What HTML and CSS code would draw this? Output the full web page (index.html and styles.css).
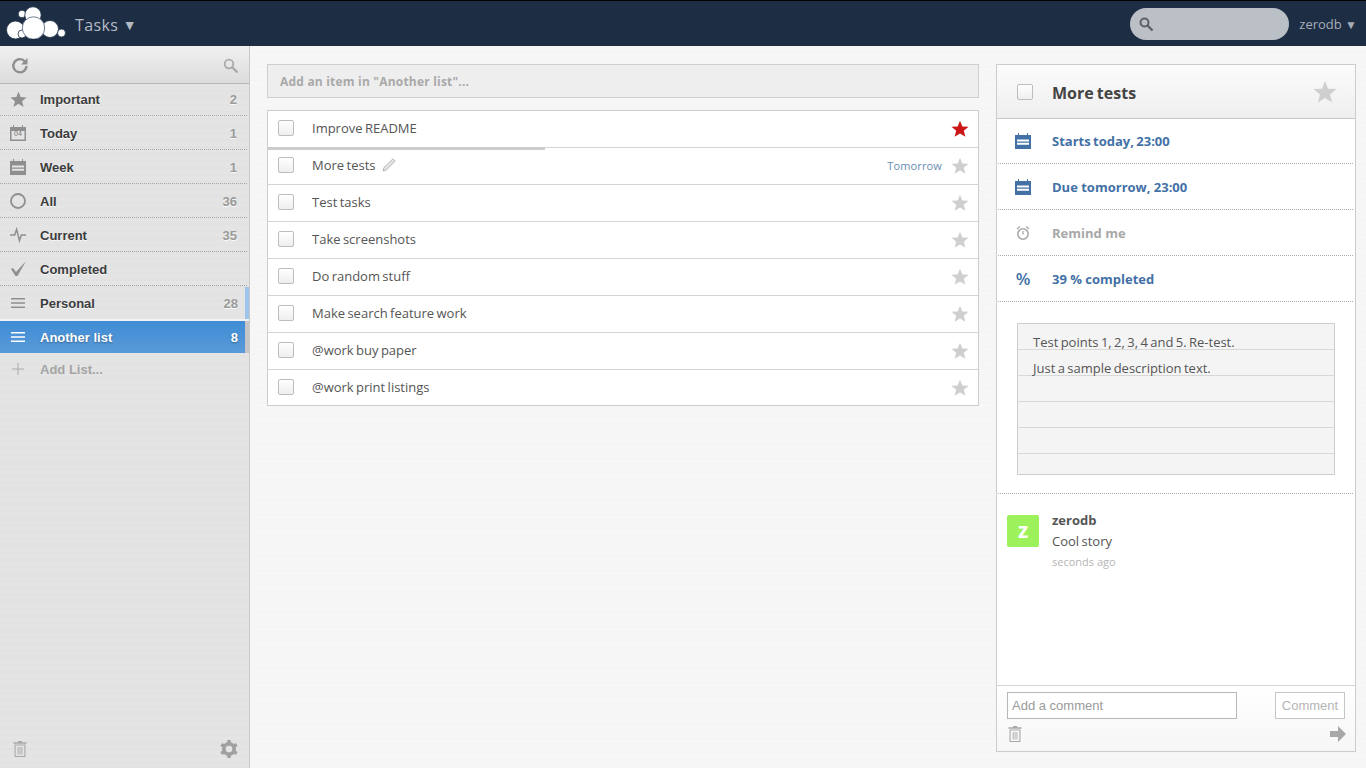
FILE: index.html
```html
<!DOCTYPE html>
<html lang="en">
<head>
<meta charset="utf-8">
<title>Tasks</title>
<link rel="stylesheet" href="styles.css">
</head>
<body>
<svg class="defs" width="0" height="0" aria-hidden="true">
  <defs>
    <symbol id="i-star" viewBox="0 0 20 20"><path d="M10 .8l2.600 6.400 6.900.4-5.300 4.400 1.800 6.700L10 15l-6 3.700 1.800-6.700L.5 7.600l6.900-.4z"/></symbol>
    <symbol id="i-trash" viewBox="0 0 14 16"><path fill-rule="evenodd" d="M5 0h4v1.200h4.500v1.600H.5V1.200H5zM1.500 3.500h11V16h-11zM2.600 4.500v10.400h8.800V4.500zM4.700 6h.9v7.500h-.9zM6.600 6h.9v7.500h-.9zM8.500 6h.9v7.500h-.9z"/></symbol>
    <symbol id="i-cal" viewBox="0 0 16 16"><path fill-rule="evenodd" d="M3 0h1v2h8V0h1v2h3v14H0V2h3zM2 6.500v2h12v-2zm0 3.200v2h12v-2z"/></symbol>
  </defs>
</svg>
<header class="topbar">
  <div class="brand">
    <svg class="logo" viewBox="0 0 60 34" width="60" height="34" aria-hidden="true">
      <g fill="#fff" stroke="#1d2d44" stroke-width=".8">
        <circle cx="16" cy="9" r="3.800"/>
        <circle cx="27" cy="10" r="8.200"/>
        <circle cx="9.500" cy="25" r="9"/>
        <circle cx="16" cy="29" r="4"/>
        <circle cx="44" cy="24" r="8.500"/>
        <circle cx="55.500" cy="28" r="4"/>
      </g>
      <circle cx="27.500" cy="23" r="11.200" fill="#fff" stroke="#6f7d90" stroke-width="1"/>
    </svg>
    <span class="app-name">Tasks <span class="caret">▼</span></span>
  </div>
  <div class="user-area">
    <div class="top-search">
      <svg viewBox="0 0 16 16" width="16" height="16" aria-hidden="true"><circle cx="6.500" cy="6.500" r="4" fill="none" stroke="#5c6067" stroke-width="2"/><path d="M9.500 9.500l5 5" stroke="#5c6067" stroke-width="2.400"/></svg>
    </div>
    <span class="user">zerodb <span class="user-caret">▼</span></span>
  </div>
</header>
<div class="layout">
  <aside class="sidebar">
    <div class="side-tools">
      <svg viewBox="0 0 18 18" width="18" height="18" aria-hidden="true"><path d="M14 4.500A6.600 6.600 0 1 0 15.500 9" fill="none" stroke="#8f8f8f" stroke-width="2.400"/><path d="M16.500 1v6.500H10z" fill="#8f8f8f"/></svg>
      <svg viewBox="0 0 16 16" width="16" height="16" aria-hidden="true"><circle cx="6" cy="6" r="4.300" fill="none" stroke="#aaa" stroke-width="1.800"/><path d="M9.300 9.300l5.200 5.200" stroke="#aaa" stroke-width="2.400"/></svg>
    </div>
    <nav class="lists">
      <div class="list-row dotted"><span class="lic"><svg width="17" height="17" class="g-fill"><use href="#i-star"/></svg></span><span class="lname">Important</span><span class="lcount">2</span></div>
      <div class="list-row dotted"><span class="lic"><svg viewBox="0 0 16 16" width="16" height="16" class="g-fill"><path fill-rule="evenodd" d="M3 0h1v2h8V0h1v2h3v14H0V2h3zM1.500 6v8.500h13V6z"/></svg><span class="cal-num">04</span></span><span class="lname">Today</span><span class="lcount">1</span></div>
      <div class="list-row dotted"><span class="lic"><svg width="16" height="16" class="g-fill"><use href="#i-cal"/></svg></span><span class="lname">Week</span><span class="lcount">1</span></div>
      <div class="list-row dotted"><span class="lic"><svg viewBox="0 0 16 16" width="16" height="16" aria-hidden="true"><circle cx="8" cy="8" r="7" fill="none" stroke="#8f8f8f" stroke-width="1.800"/></svg></span><span class="lname">All</span><span class="lcount">36</span></div>
      <div class="list-row dotted"><span class="lic"><svg viewBox="0 0 18 16" width="17" height="16" aria-hidden="true"><path d="M0 8h5l2-6 3 12 2-6h5" fill="none" stroke="#8f8f8f" stroke-width="1.600"/></svg></span><span class="lname">Current</span><span class="lcount">35</span></div>
      <div class="list-row dotted"><span class="lic"><svg viewBox="0 0 18 16" width="18" height="16" aria-hidden="true"><path d="M1 8l2-1 3 4L16 0l-8.500 15h-2z" fill="#8f8f8f"/></svg></span><span class="lname">Completed</span></div>
      <div class="list-row personal"><span class="lic"><svg viewBox="0 0 16 12" width="16" height="12" class="g-fill"><path d="M1 1h14v1.600H1zM1 5.200h14v1.600H1zM1 9.400h14V11H1z"/></svg></span><span class="lname">Personal</span><span class="lcount">28</span></div>
      <div class="list-row active"><span class="lic"><svg viewBox="0 0 16 12" width="16" height="12" class="g-white"><path d="M1 1h14v1.600H1zM1 5.200h14v1.600H1zM1 9.400h14V11H1z"/></svg></span><span class="lname">Another list</span><span class="lcount">8</span></div>
      <div class="add-list"><span class="lic"><svg viewBox="0 0 12 12" width="12" height="12" aria-hidden="true"><path d="M5.500 0h1v5.500H12v1H6.500V12h-1V6.500H0v-1h5.500z" fill="#aaa"/></svg></span><span>Add List...</span></div>
    </nav>
    <div class="side-foot">
      <svg width="14" height="16" class="g-light"><use href="#i-trash"/></svg>
      <svg viewBox="0 0 18 18" width="18" height="18" aria-hidden="true"><circle cx="9" cy="9" r="5.200" fill="none" stroke="#a0a0a0" stroke-width="3.600"/><path d="M9 9L9 0M9 9L9 18M9 9L1.200 4.500M9 9l7.800-4.500M9 9l-7.800 4.500M9 9l7.800 4.500" stroke="#a0a0a0" stroke-width="3.400"/><circle cx="9" cy="9" r="3.300" fill="#e4e4e4"/></svg>
    </div>
  </aside>
  <main class="tasks">
    <div class="add-item">Add an item in "Another list"...</div>
    <ul class="task-list">
      <li class="task"><span class="check"></span><span class="task-title">Improve README</span><svg class="star red" width="18" height="18"><use href="#i-star"/></svg></li>
      <li class="task progress"><span class="check"></span><span class="task-title">More tests</span><svg class="pencil" viewBox="0 0 14 14" width="14" height="14" aria-hidden="true"><path d="M1 13l1-3.500L11 .8l2.200 2.200L4.300 12z" fill="#e4e4e4" stroke="#b5b5b5"/></svg><span class="due">Tomorrow</span><svg class="star" width="18" height="18"><use href="#i-star"/></svg></li>
      <li class="task"><span class="check"></span><span class="task-title">Test tasks</span><svg class="star" width="18" height="18"><use href="#i-star"/></svg></li>
      <li class="task"><span class="check"></span><span class="task-title">Take screenshots</span><svg class="star" width="18" height="18"><use href="#i-star"/></svg></li>
      <li class="task"><span class="check"></span><span class="task-title">Do random stuff</span><svg class="star" width="18" height="18"><use href="#i-star"/></svg></li>
      <li class="task"><span class="check"></span><span class="task-title">Make search feature work</span><svg class="star" width="18" height="18"><use href="#i-star"/></svg></li>
      <li class="task"><span class="check"></span><span class="task-title">@work buy paper</span><svg class="star" width="18" height="18"><use href="#i-star"/></svg></li>
      <li class="task"><span class="check"></span><span class="task-title">@work print listings</span><svg class="star" width="18" height="18"><use href="#i-star"/></svg></li>
    </ul>
  </main>
  <section class="detail">
    <div class="detail-head"><span class="check"></span><h1>More tests</h1><svg class="star big" width="24" height="24"><use href="#i-star"/></svg></div>
    <div class="detail-row first"><svg width="16" height="16" class="g-blue"><use href="#i-cal"/></svg><span class="blue">Starts today, 23:00</span></div>
    <div class="detail-row"><svg width="16" height="16" class="g-blue"><use href="#i-cal"/></svg><span class="blue">Due tomorrow, 23:00</span></div>
    <div class="detail-row"><svg viewBox="0 0 16 16" width="16" height="16" aria-hidden="true"><circle cx="8" cy="9" r="5.200" fill="none" stroke="#aaa" stroke-width="1.600"/><path d="M8 6v3.500M2 4l3-2.500M14 4l-3-2.500" stroke="#aaa" stroke-width="1.300" fill="none"/></svg><span class="grey">Remind me</span></div>
    <div class="detail-row"><span class="pct">%</span><span class="blue">39 % completed</span></div>
    <div class="notes-wrap">
      <div class="notes">Test points 1, 2, 3, 4 and 5. Re-test.<br>Just a sample description text.</div>
    </div>
    <div class="comments">
      <div class="avatar">z</div>
      <div class="comment-body">
        <div class="c-user">zerodb</div>
        <div class="c-text">Cool story</div>
        <div class="c-time">seconds ago</div>
      </div>
    </div>
    <div class="detail-foot">
      <div class="comment-form">
        <div class="comment-input">Add a comment</div>
        <div class="comment-btn">Comment</div>
      </div>
      <div class="foot-icons">
        <svg width="14" height="16" class="g-light"><use href="#i-trash"/></svg>
        <svg class="arrow" viewBox="0 0 16 16" width="16" height="16" aria-hidden="true"><path d="M0 5h8V0l8 8-8 8v-5H0z" fill="#a8a8a8"/></svg>
      </div>
    </div>
  </section>
</div>
</body>
</html>
```
FILE: styles.css
```css
* { box-sizing: border-box; }
html, body { height: 100%; }
body {
  margin: 0;
  height: 768px;
  overflow: hidden;
  display: flex;
  flex-direction: column;
  font-family: "Open Sans", sans-serif;
  font-size: 13px;
  color: #555;
  background: repeating-linear-gradient(#f6f6f6 0 3px, #f5f5f5 3px 5px, #f7f7f7 5px 7px);
}
.defs { position: absolute; }
.g-fill { fill: #8f8f8f; }
.g-white { fill: #fff; }
.g-light { fill: #a8a8a8; }
.g-blue { fill: #4371a6; }

.topbar {
  height: 46px;
  flex: none;
  display: flex;
  justify-content: space-between;
  align-items: center;
  background: #1d2d44;
  border-top: 1px solid #000;
}
.brand { display: flex; align-items: center; padding-left: 6px; }
.logo { display: block; margin-top: -3px; }
.app-name { margin-left: 9px; margin-top: 2px; font-size: 16px; color: #b4bac3; letter-spacing: .35px; }
.caret { font-size: 14px; position: relative; top: -1px; }
.user-area { display: flex; align-items: center; }
.top-search {
  width: 159px;
  height: 32px;
  border-radius: 16px;
  background: #bbc0c7;
  display: flex;
  align-items: center;
  padding-left: 8px;
}
.user { margin: 0 9px 0 10px; font-size: 13px; color: #a6adb8; }
.user-caret { font-size: 12px; }

.layout { flex: 1; display: flex; min-height: 0; }
.sidebar {
  width: 250px;
  flex: none;
  display: flex;
  flex-direction: column;
  background: repeating-linear-gradient(#e4e4e4 0 2px, #e2e2e2 2px 4px, #e4e4e4 4px 7px);
  border-right: 1px solid #c8c8c8;
  font-family: "Liberation Sans", sans-serif;
}
.side-tools {
  height: 38px;
  flex: none;
  display: flex;
  justify-content: space-between;
  align-items: center;
  padding: 3px 10px 0 11px;
  background: linear-gradient(#f0f0f0, #dcdcdc);
  border-bottom: 1px solid #b8b8b8;
}
.lists { flex: 1; margin-top: -2px; }
.list-row {
  height: 34px;
  display: flex;
  align-items: center;
  padding: 0 10px;
  font-size: 13px;
  font-weight: 700;
  color: #3c3c3c;
  text-shadow: 0 1px 0 rgba(255,255,255,.8);
}
.dotted { margin-right: 2px; padding-top: 1px; border-bottom: 1px dotted #a5a5a5; }
.lic { width: 30px; flex: none; display: flex; align-items: center; position: relative; }
.cal-num { position: absolute; left: 4px; top: 5px; font-size: 7px; font-weight: 400; color: #777; text-shadow: none; }
.lname { flex: 1; }
.lcount { color: #9a9a9a; }
.personal { border-right: 4px solid #9cc4ec; padding-right: 7px; height: 32px; margin-top: 1px; }
.active {
  height: 32px;
  margin-top: 2px;
  padding-right: 7px;
  border-right: 4px solid #c6c6c6;
  background: linear-gradient(#3f8cd6, #5a9ad8);
  color: #fff;
  text-shadow: 0 1px 2px rgba(0,0,0,.35);
  box-shadow: 0 -2px 0 #f2f2f2;
}
.active .lcount { color: #fff; }
.add-list {
  height: 32px;
  display: flex;
  align-items: center;
  padding-left: 12px;
  font-size: 13px;
  font-weight: 700;
  color: #a5a5a5;
}
.add-list .lic { width: 28px; }
.side-foot {
  flex: none;
  height: 38px;
  display: flex;
  justify-content: space-between;
  align-items: center;
  padding: 0 11px 0 13px;
}

.tasks { width: 712px; flex: none; margin: 18px 17px 0; }
.add-item {
  height: 34px;
  padding: 0 12px;
  line-height: 33px;
  font-size: 12px;
  font-weight: 700;
  letter-spacing: .2px;
  color: #a9a9a9;
  background: #eee;
  border: 1px solid #cfcfcf;
}
.task-list {
  list-style: none;
  margin: 12px 0 0;
  padding: 0;
  background: #fff;
  border: 1px solid #cdcdcd;
}
.task {
  height: 37px;
  display: flex;
  align-items: center;
  padding: 0 9px 2px 10px;
  border-bottom: 1px solid #d4d4d4;
  position: relative;
}
.task:last-child { border-bottom: 0; height: 35px; padding-bottom: 1px; }
.task .star { margin-top: 1px; }
.progress::before {
  content: "";
  position: absolute;
  left: 0;
  top: -1px;
  width: 277px;
  height: 3px;
  background: #ccc;
}
.check {
  width: 16px;
  height: 16px;
  flex: none;
  border: 1px solid #bdbdbd;
  border-radius: 2px;
  background: linear-gradient(#fff, #eee);
}
.task-title { margin-left: 18px; font-size: 13px; color: #555; word-spacing: -1px; }
.pencil { margin-left: 7px; }
.star { margin-left: auto; flex: none; fill: #cfcfcf; }
.star.red { fill: #cc1417; }
.due { margin-left: auto; font-size: 11px; color: #6a8cb3; letter-spacing: .15px; }
.due + .star { margin-left: 9px; }

.detail {
  width: 360px;
  flex: none;
  margin: 18px 0 16px 0;
  display: flex;
  flex-direction: column;
  background: #fff;
  border: 1px solid #cdcdcd;
}
.detail-head {
  height: 54px;
  flex: none;
  display: flex;
  align-items: center;
  padding: 0 18px 0 20px;
  background: linear-gradient(#fbfbfb, #efefef);
  border-bottom: 1px solid #c6c6c6;
}
.detail-head h1 { margin: 2px 0 0 19px; font-size: 16px; font-weight: 700; color: #444; word-spacing: -1px; }
.detail-row {
  height: 46px;
  flex: none;
  display: flex;
  align-items: center;
  padding: 0 0 0 17px;
  margin: 0 2px 0 1px;
  border-bottom: 1px dotted #aaa;
  font-size: 13px;
  font-weight: 700;
}
.detail-row.first { height: 45px; word-spacing: -1px; }
.detail-row > span:last-child { margin-left: 21px; }
.blue { color: #4371a6; }
.grey { color: #a8a8a8; }
.pct { width: 16px; color: #4371a6; font-size: 17px; font-weight: 600; line-height: 1; text-align: center; }
.notes-wrap { height: 192px; flex: none; padding: 21px 18px 0 19px; margin: 0 2px 0 1px; border-bottom: 1px dotted #aaa; }
.notes {
  height: 152px;
  padding: 5px 15px 0;
  border: 1px solid #cdcdcd;
  font-size: 13px;
  line-height: 26px;
  word-spacing: -1px;
  color: #555;
  background-color: #f4f4f4;
  background-image: repeating-linear-gradient(#f4f4f4 0 25px, #d8d8d8 25px 26px);
}
.comments { flex: 1; display: flex; padding: 21px 10px 0; }
.avatar {
  width: 32px;
  height: 32px;
  border-radius: 2px;
  background: #9df25b;
  color: #fff;
  font-size: 21px;
  font-weight: 700;
  line-height: 30px;
  text-align: center;
}
.comment-body { margin-left: 13px; margin-top: -5px; }
.c-user { font-size: 13px; font-weight: 700; color: #555; line-height: 20px; }
.c-text { font-size: 13px; line-height: 22px; color: #555; word-spacing: -1px; }
.c-time { font-size: 11px; line-height: 20px; color: #b5b5b5; }
.detail-foot {
  height: 66px;
  flex: none;
  padding: 6px 10px 0 10px;
  border-top: 1px solid #d4d4d4;
  background: linear-gradient(#fff, #f6f6f6);
}
.comment-form { display: flex; justify-content: space-between; font-family: "Liberation Sans", sans-serif; }
.comment-input {
  width: 230px;
  height: 27px;
  padding-left: 4px;
  line-height: 25px;
  font-size: 13px;
  color: #9a9a9a;
  background: #fff;
  border: 1px solid #b8b8b8;
}
.comment-btn {
  width: 70px;
  height: 27px;
  line-height: 25px;
  text-align: center;
  font-size: 13px;
  color: #b5b5b5;
  background: #fff;
  border: 1px solid #c6c6c6;
}
.foot-icons { display: flex; justify-content: space-between; padding: 7px 0 0 1px; }
.arrow { margin-right: -1px; }
```
